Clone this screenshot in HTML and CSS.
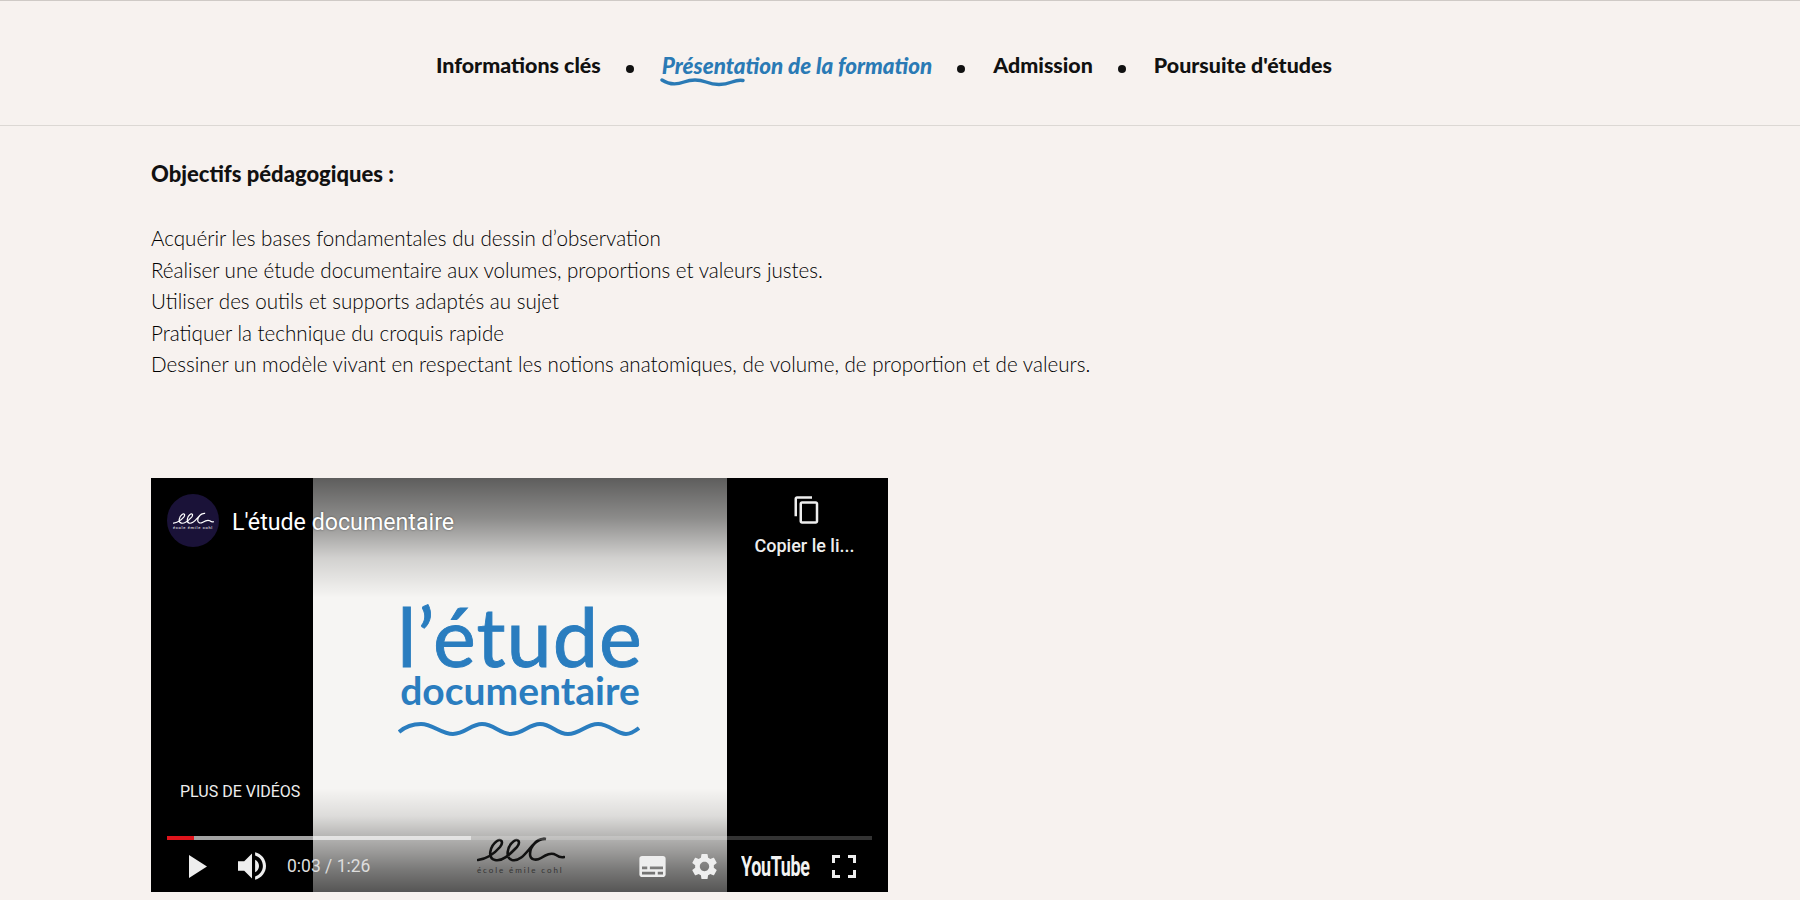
FILE: index.html
```html
<html>
  <head>
    <meta charset="utf-8">
    <link rel="stylesheet" href="styles.css">
  </head>
  <body>
    <svg class="defs" width="0" height="0">
      <symbol id="eec" viewBox="0 0 88 26">
        <path d="M1 23C9 22 17 17 23 10C27 5 24 1 20 4C13 9 10 21 18 23C26 25 34 16 40 10C44 5 41 1 37 4C30 9 28 21 35 23C44 25 50 14 56 8C59 4 63 1 69 2C61 1 53 9 53 17C53 23 59 24 64 21C69 18 74 15 79 18C82 20 84 21 87 20" fill="none" stroke="currentColor" stroke-width="2.600" stroke-linecap="round"/>
      </symbol>
    </svg>

    <!-- navigation -->
    <nav class="tabs">
      <a class="tab">Informations clés</a>
      <span class="dot"></span>
      <a class="tab active">Présentation de la formation
        <svg class="tab-wave" viewBox="0 0 85 10"><path d="M2 3C8 7 16 8 24 5C32 2 38 2 46 5C54 8 64 8 72 5C76 3.500 80 3 83 3.500" fill="none" stroke="#2a7ab5" stroke-width="3.400" stroke-linecap="round"/></svg>
      </a>
      <span class="dot"></span>
      <a class="tab">Admission</a>
      <span class="dot"></span>
      <a class="tab">Poursuite d'études</a>
    </nav>

    <main class="content">
      <h2 class="heading">Objectifs pédagogiques :</h2>
      <ul class="goals">
        <li>Acquérir les bases fondamentales du dessin d’observation</li>
        <li>Réaliser une étude documentaire aux volumes, proportions et valeurs justes.</li>
        <li>Utiliser des outils et supports adaptés au sujet</li>
        <li>Pratiquer la technique du croquis rapide</li>
        <li>Dessiner un modèle vivant en respectant les notions anatomiques, de volume, de proportion et de valeurs.</li>
      </ul>

      <!-- lecteur video -->
      <div class="video">
        <div class="thumb">
          <div class="thumb-title">l’étude</div>
          <div class="thumb-sub">documentaire</div>
          <svg class="thumb-wave" viewBox="0 0 242 16"><path d="M1 11C8 5 15 3 23 3C35 3 43 13 55 13C67 13 73 3 84 3C96 3 102 13 113 13C125 13 131 3 142 3C154 3 158 13 170 13C182 13 188 3 200 3C212 3 218 13 228 13C233 13 237 10 241 7" fill="none" stroke="#2a7dbf" stroke-width="4"/></svg>
          <div class="thumb-shade"></div>
          <div class="brand">
            <svg class="brand-logo"><use href="#eec"/></svg>
            <div class="brand-name">école émile cohl</div>
          </div>
        </div>

        <div class="video-top">
          <div class="avatar">
            <svg class="avatar-logo"><use href="#eec"/></svg>
            <div class="avatar-name">école émile cohl</div>
          </div>
          <div class="video-title">L'étude documentaire</div>
          <div class="copy">
            <svg class="copy-icon" viewBox="0 0 24 24"><path d="M16 1H4c-1.100 0-2 .9-2 2v14h2V3h12V1zm3 4H8c-1.100 0-2 .9-2 2v14c0 1.100.9 2 2 2h11c1.100 0 2-.9 2-2V7c0-1.100-.9-2-2-2zm0 16H8V7h11v14z"/></svg>
            <div>Copier le li...</div>
          </div>
        </div>

        <div class="more">PLUS DE VIDÉOS</div>

        <div class="video-bottom">
          <div class="progress">
            <div class="progress-load"></div>
            <div class="progress-play"></div>
          </div>
          <div class="controls">
            <svg class="ctl ctl-play" viewBox="0 0 18 23"><path d="M0 0L18 11.500L0 23z"/></svg>
            <svg class="ctl ctl-volume" viewBox="8 9 18 18"><path d="M8 21h4l5 5V10l-5 5H8v6zM19 14v8c1.480-.68 2.500-2.230 2.500-4 0-1.740-1.020-3.260-2.500-4zM19 11.290c2.890.86 5 3.540 5 6.710s-2.110 5.850-5 6.710v2.060c4.010-.91 7-4.490 7-8.770s-2.990-7.860-7-8.770v2.060z"/></svg>
            <div class="time">0:03 / 1:26</div>
            <svg class="ctl ctl-subs" viewBox="2 4 20 16"><path d="M20 4H4c-1.100 0-2 .9-2 2v12c0 1.100.9 2 2 2h16c1.100 0 2-.9 2-2V6c0-1.100-.9-2-2-2zM4 12h4v2H4v-2zm10 6H4v-2h10v2zm6 0h-4v-2h4v2zm0-4H10v-2h10v2z"/></svg>
            <svg class="ctl ctl-gear" viewBox="2.400 2.400 19.200 19.200"><path d="M19.140 12.940c.04-.3.06-.61.06-.94 0-.32-.02-.64-.07-.94l2.030-1.580c.18-.14.23-.41.12-.61l-1.920-3.320c-.12-.22-.37-.29-.59-.22l-2.390.96c-.5-.38-1.030-.7-1.620-.94L14.400 2.810c-.04-.24-.24-.41-.48-.41h-3.840c-.24 0-.43.17-.47.41L9.250 5.350c-.59.24-1.130.57-1.620.94l-2.390-.96c-.22-.08-.47 0-.59.22L2.740 8.870c-.12.21-.08.47.12.61l2.030 1.580c-.05.3-.09.63-.09.94s.02.64.07.94l-2.030 1.580c-.18.14-.23.41-.12.61l1.920 3.320c.12.22.37.29.59.22l2.390-.96c.5.38 1.030.7 1.620.94l.36 2.540c.05.24.24.41.48.41h3.840c.24 0 .44-.17.47-.41l.36-2.540c.59-.24 1.130-.56 1.620-.94l2.390.96c.22.08.47 0 .59-.22l1.920-3.320c.12-.22.07-.47-.12-.61l-2.010-1.580zM12 15.600c-1.980 0-3.600-1.620-3.600-3.600s1.620-3.600 3.600-3.600 3.600 1.620 3.600 3.600-1.620 3.600-3.600 3.600z"/></svg>
            <div class="yt"><span>YouTube</span></div>
            <svg class="ctl ctl-full" viewBox="0 0 24 23"><path d="M0 8V0h8v3H3v5zM16 0h8v8h-3V3h-5zM24 15v8h-8v-3h5v-5zM8 23H0v-8h3v5h5z"/></svg>
          </div>
        </div>
      </div>
    </main>
  </body>
</html>
```

FILE: styles.css
```css
* {
  margin: 0;
  padding: 0;
  box-sizing: border-box;
}
body {
  background-color: #f7f2ef;
  color: #222;
  font-family: "Lato", "Liberation Sans", sans-serif;
  overflow: hidden;
}
li {
  list-style: none;
}
.defs {
  position: absolute;
}

/* navigation */
.tabs {
  display: flex;
  align-items: center;
  justify-content: center;
  height: 126px;
  padding: 4px 32px 0 0;
  border-top: 1px solid #cfcac6;
  border-bottom: 1px solid #dcd8d4;
}
.tab {
  position: relative;
  font-size: 21.400px;
  font-weight: 900;
  color: #111;
}
.tab.active {
  color: #2a7ab5;
  font-size: 22.400px;
  font-style: italic;
}
.tab-wave {
  position: absolute;
  left: -2px;
  top: 25px;
  width: 85px;
  height: 10px;
}
.dot {
  width: 8px;
  height: 8px;
  margin: 8px 28px 0 25px;
  border-radius: 50%;
  background-color: #111;
}

/* contenu */
.content {
  padding: 32px 0 0 151px;
}
.heading {
  font-size: 22px;
  font-weight: 900;
  line-height: 32px;
  color: #111;
}
.goals {
  margin-top: 33px;
  font-size: 20.600px;
  font-weight: 300;
  line-height: 31.500px;
  color: #000;
}

/* lecteur video */
.video {
  position: relative;
  width: 737px;
  height: 414px;
  margin-top: 97px;
  background-color: #000;
  font-family: "Roboto", "Liberation Sans", sans-serif;
  color: #eee;
  overflow: hidden;
}
.thumb {
  display: flex;
  flex-direction: column;
  align-items: center;
  position: relative;
  width: 414px;
  height: 414px;
  margin-left: 162px;
  padding-top: 123px;
  background-color: #f6f5f3;
  color: #2a7dbf;
}
.thumb-title {
  font-family: "Lato", sans-serif;
  font-size: 81px;
  font-weight: 400;
  line-height: 70px;
  letter-spacing: 1px;
  -webkit-text-stroke: .9px #2a7dbf;
}
.thumb-sub {
  font-family: "Lato", sans-serif;
  font-size: 39px;
  font-weight: 700;
  line-height: 38px;
}
.thumb-wave {
  width: 242px;
  height: 16px;
  margin-top: 12px;
  margin-left: -3px;
}
.thumb-shade {
  position: absolute;
  inset: 0;
  background: linear-gradient(to bottom, rgba(0, 0, 0, .62) 0, rgba(0, 0, 0, .43) 40px, rgba(0, 0, 0, .15) 80px, rgba(0, 0, 0, 0) 120px, rgba(0, 0, 0, 0) 310px, rgba(0, 0, 0, .1) 338px, rgba(0, 0, 0, .26) 358px, rgba(0, 0, 0, .38) 375px, rgba(0, 0, 0, .51) 392px, rgba(0, 0, 0, .65) 414px);
}
.brand {
  position: absolute;
  left: 164px;
  top: 359px;
  width: 90px;
  color: #111;
}
.brand-logo {
  display: block;
  width: 88px;
  height: 26px;
}
.brand-name {
  margin-top: 2px;
  font-family: "Lato", sans-serif;
  font-size: 8px;
  letter-spacing: 1.900px;
  color: #333;
  white-space: nowrap;
}
.video-top {
  display: flex;
  align-items: flex-start;
  position: absolute;
  left: 16px;
  right: 0;
  top: 16px;
}
.avatar {
  display: flex;
  flex-direction: column;
  align-items: center;
  width: 52px;
  height: 53px;
  padding-top: 18px;
  border-radius: 50%;
  background-color: #1a1238;
  color: #fff;
}
.avatar-logo {
  display: block;
  width: 41px;
  height: 13px;
}
.avatar-name {
  font-size: 4px;
  letter-spacing: .7px;
  white-space: nowrap;
  line-height: 6px;
}
.video-title {
  flex: 1;
  margin: 14px 0 0 13px;
  font-size: 23.200px;
  line-height: 28px;
  color: #fff;
  text-shadow: 0 0 2px rgba(0, 0, 0, .5);
}
.copy {
  display: flex;
  flex-direction: column;
  align-items: center;
  width: 133px;
  margin: 1px 17px 0 0;
  font-size: 18px;
  font-weight: 500;
}
.copy-icon {
  width: 30px;
  height: 30px;
  margin: 0 -4px 10px 0;
  fill: #eee;
}
.more {
  position: absolute;
  left: 29px;
  top: 305px;
  font-size: 16px;
  line-height: 18px;
}
.video-bottom {
  position: absolute;
  left: 16px;
  right: 16px;
  bottom: 0;
  height: 56px;
}
.progress {
  position: relative;
  height: 4px;
  background-color: rgba(255, 255, 255, .2);
}
.progress-load {
  position: absolute;
  top: 0;
  bottom: 0;
  left: 0;
  width: 304px;
  background-color: rgba(255, 255, 255, .55);
}
.progress-play {
  position: absolute;
  top: 0;
  bottom: 0;
  left: 0;
  width: 27px;
  background-color: #e0141c;
}
.controls {
  display: flex;
  align-items: center;
  height: 23px;
  margin-top: 15px;
  padding-left: 22px;
}
.ctl {
  flex: none;
  fill: #eee;
}
.ctl-play {
  width: 18px;
  height: 23px;
}
.ctl-volume {
  width: 28px;
  height: 28px;
  margin-left: 31px;
}
.time {
  width: 352px;
  margin-left: 21px;
  font-size: 17.500px;
  color: #ddd;
}
.ctl-subs {
  width: 27px;
  height: 21px;
}
.ctl-gear {
  width: 25px;
  height: 25px;
  margin-left: 26px;
}
.yt {
  width: 69px;
  margin-left: 24px;
  color: #f2f2f2;
  font-size: 28px;
  font-weight: 700;
  line-height: 23px;
}
.yt span {
  display: inline-block;
  letter-spacing: -.5px;
  transform: scaleX(.64);
  transform-origin: left center;
}
.ctl-full {
  width: 24px;
  height: 23px;
  margin-left: 22px;
}
```
